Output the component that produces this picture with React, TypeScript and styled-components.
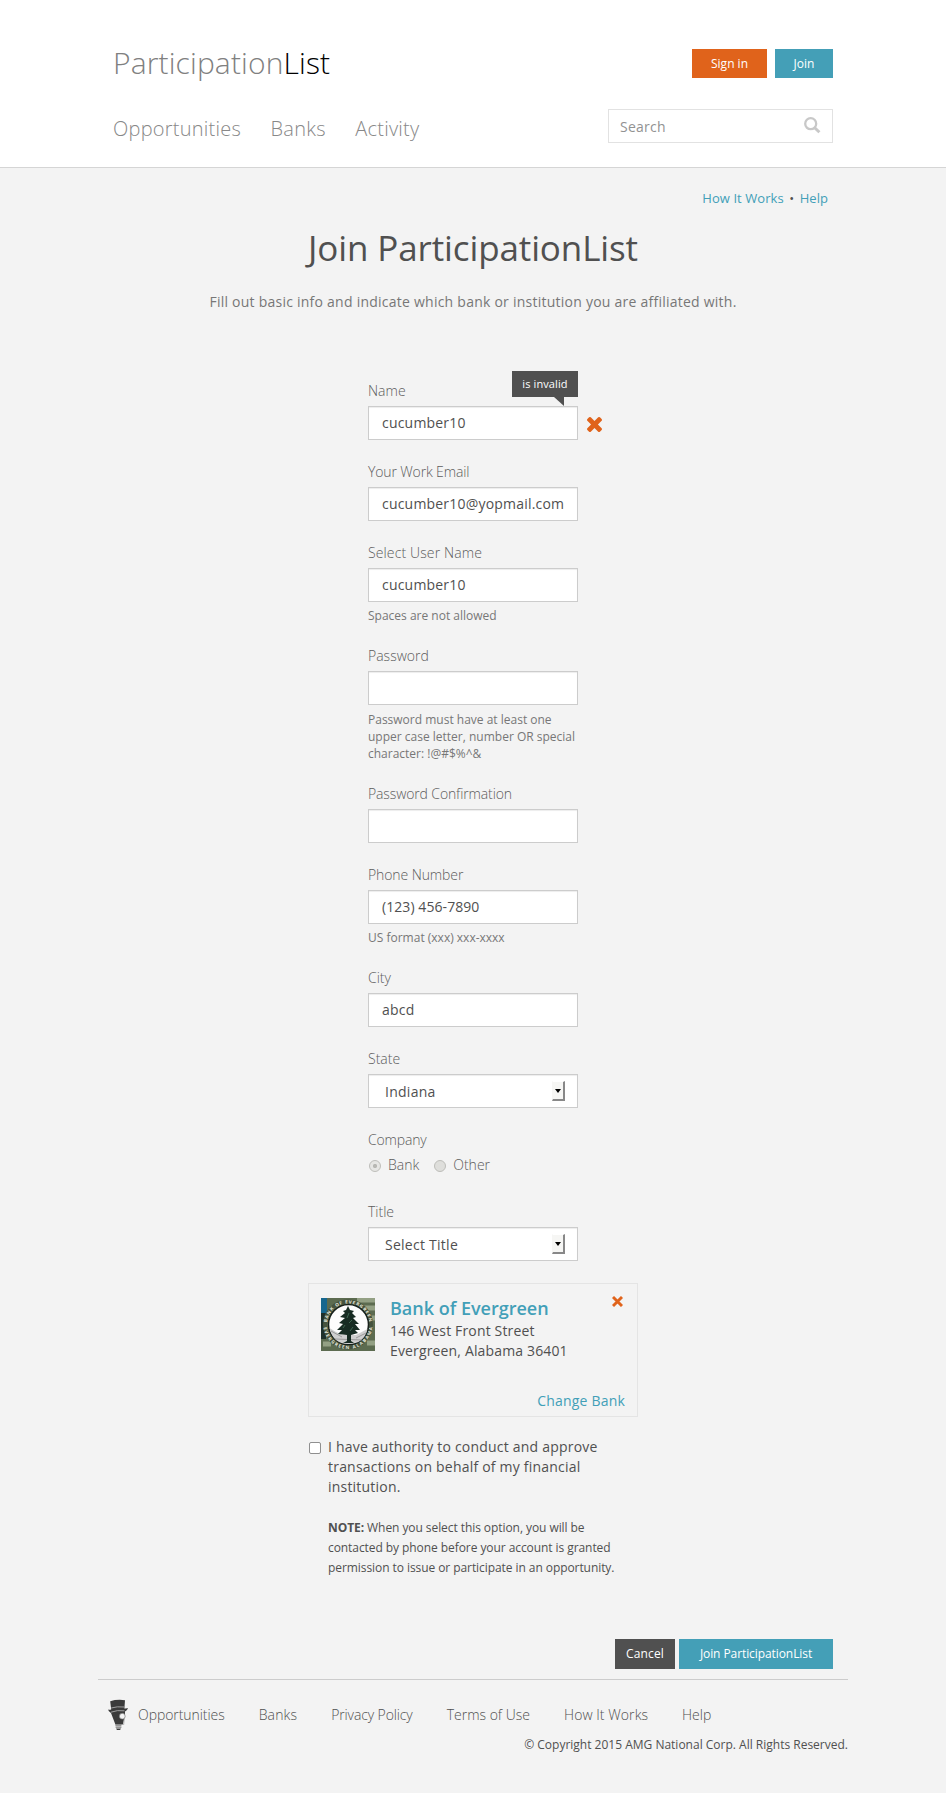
import React from "react";
import styled, { createGlobalStyle } from "styled-components";

const Global = createGlobalStyle`
  *, *::before, *::after { box-sizing: border-box; }
  body { margin: 0; background: #f3f3f3; color: #505050; font: 14px/20px "Open Sans", "Noto Sans", sans-serif; }
  a { color: inherit; text-decoration: none; }
  button, input { font-family: inherit; letter-spacing: inherit; }
`;

const Page = styled.div`min-height: 1793px;`;
const Header = styled.header`
  height: 168px; background: #fff; border-bottom: 1px solid #d5d5d5;
  padding: 49px 113px 0;
`;
const HeaderRow = styled.div<{ $top?: number }>`
  display: flex; justify-content: space-between; align-items: flex-start;
  margin-top: ${p => p.$top ?? 0}px;
`;
const Logo = styled.a`
  font-size: 30px; font-weight: 300; line-height: 27px; letter-spacing: .13px; color: #808080;
  span { color: #000; }
`;
const Actions = styled.div<{ $gap: number }>`display: flex; gap: ${p => p.$gap}px;`;
const Button = styled.button<{ $bg: string; $w: number; $h: number; $track?: number }>`
  border: 0; padding: 0; background: ${p => p.$bg}; color: #fff; letter-spacing: ${p => p.$track ?? 0}px;
  width: ${p => p.$w}px; height: ${p => p.$h}px; font-size: 12px; line-height: 20px;
`;
const Nav = styled.nav`
  display: flex; gap: 29.5px; font-size: 20px; font-weight: 300; line-height: 40px; letter-spacing: .24px; color: #888;
`;
const Search = styled.label`
  width: 225px; height: 34px; border: 1px solid #e2e2e2; display: flex; align-items: center;
  justify-content: space-between; padding: 0 11px 2px 11px; letter-spacing: .24px;
  input { border: 0; outline: 0; width: 150px; padding: 2px 0 0; font-size: 14px; background: none; }
  input::placeholder { color: #929292; opacity: 1; }
`;
const HelpLinks = styled.div`
  display: flex; justify-content: flex-end; gap: 5.5px; padding: 20px 118px 0 0; font-size: 13px; line-height: 20px; letter-spacing: .06px;
`;
const Link = styled.a`&& { color: #429fb8; }`;
const Title = styled.h1`
  margin: 20px 0 0; text-align: center; font-size: 35px; font-weight: 400; line-height: 40px; letter-spacing: -.12px;
`;
const Intro = styled.p`margin: 24px 0 0; text-align: center; color: #777; font-size: 14px; line-height: 20px; letter-spacing: .24px;`;
const Form = styled.form`width: 210px; margin: 69px 0 0 368px;`;
const Field = styled.div`position: relative; margin-bottom: 22px;`;
const Label = styled.label<{ $track?: number }>`
  display: block; font-weight: 300; line-height: 20px; margin-bottom: 5px; color: #5c5c5c; letter-spacing: ${p => p.$track ?? 0}px;
`;
const Input = styled.input`
  display: block; width: 210px; height: 34px; border: 1px solid #ccc; background: #fff;
  box-shadow: inset 0 1px 1px rgba(0,0,0,.075); padding: 0 13px 2px; font-size: 14px; color: #505050; outline: 0; border-radius: 0;
  letter-spacing: .2px;
  &[type="tel"] { letter-spacing: .07px; }
`;
const Hint = styled.div<{ $top?: number }>`
  margin-top: ${p => p.$top ?? 5}px; font-size: 12px; line-height: 17px; color: #777;
`;
const Tip = styled.div`
  position: absolute; right: 0; top: -10px; width: 66px; height: 26px; background: #505050; color: #fff;
  font-size: 11px; line-height: 25px; text-align: center; letter-spacing: .1px;
  &::after { content: ""; position: absolute; right: 14px; top: 26px; border-top: 9px solid #505050; border-left: 10px solid transparent; }
`;
const FieldMark = styled.span`position: absolute; left: 219px; top: 36px; line-height: 0;`;
const SelectBox = styled.div`
  width: 210px; height: 34px; border: 1px solid #ccc; background: #fff; box-shadow: inset 0 1px 1px rgba(0,0,0,.075);
  display: flex; align-items: center; justify-content: space-between; padding: 2px 12px 0 16px; letter-spacing: .26px;
`;
const Drop = styled.span`
  width: 13px; height: 20px; background: #f6f6f4; border: solid; border-width: 1px 2px 2px 1px;
  border-color: #fff #888 #888 #f6f6f4; display: flex; align-items: center; justify-content: center; margin-bottom: 2px;
`;
const Radios = styled.div`display: flex; height: 20px; margin: 0 0 27px 1px; font-weight: 300; color: #5c5c5c;`;
const RadioItem = styled.span`display: flex; align-items: center; gap: 7px; margin-right: 15px;`;
const RadioDot = styled.span<{ $on?: boolean }>`
  width: 12px; height: 12px; margin-top: 2px; border-radius: 50%; border: 1px solid #bdbdb9;
  background: ${p => p.$on ? "radial-gradient(circle, #b8b8b4 0 1.8px, #e6e6e4 2.4px)" : "#dededb"};
`;
const Card = styled.section`
  width: 330px; height: 134px; margin-left: 308px; border: 1px solid #e4e4e4; padding: 14px 12px 0;
  display: grid; grid-template-columns: 54px 1fr 13px; column-gap: 15px; letter-spacing: .15px;
`;
const BankName = styled.div`
  font-size: 18px; font-weight: 600; line-height: 20px; margin-bottom: 3px; color: #429fb8; letter-spacing: 0;
`;
const ChangeBank = styled.div`grid-column: 1 / -1; text-align: right; margin-top: 24px; letter-spacing: .2px;`;
const Authority = styled.div`
  display: flex; width: 330px; margin: 20px 0 0 309px; letter-spacing: .21px; white-space: nowrap;
`;
const Check = styled.span`width: 12px; height: 12px; flex: none; margin: 5px 7px 0 0; border: 1px solid #8f8f8f; border-radius: 2px; background: #fff;`;
const Note = styled.p`margin: 21px 0 0; font-size: 12px; line-height: 20px; letter-spacing: -.07px;`;
const Submit = styled.div`display: flex; justify-content: flex-end; gap: 4px; margin: 61px 113px 10px 0;`;
const Footer = styled.footer`margin: 0 98px; border-top: 1px solid #ccc; padding: 19px 0 0 9px;`;
const FooterNav = styled.nav`
  display: flex; align-items: flex-start; gap: 34px; font-weight: 300; line-height: 32px; height: 33px;
  svg { margin-right: -25px; }
`;
const FooterLink = styled.a<{ $track?: number }>`letter-spacing: ${p => p.$track ?? 0}px;`;
const Copyright = styled.div`text-align: right; font-size: 12px; line-height: 20px; margin-top: 3px;`;

const CrossIcon = () => (
  <svg width="15" height="15" viewBox="110 434 1188 1188" fill="#e0631b">
    <path d="M1298 1322q0 40-28 68l-136 136q-28 28-68 28t-68-28l-294-294-294 294q-28 28-68 28t-68-28l-136-136q-28-28-28-68t28-68l294-294-294-294q-28-28-28-68t28-68l136-136q28-28 68-28t68 28l294 294 294-294q28-28 68-28t68 28l136 136q28 28 28 68t-28 68l-294 294 294 294q28 28 28 68z" transform="translate(0 68)" />
  </svg>
);
const RemoveMark = styled.svg`margin-top: -2px;`;
const RemoveIcon = () => (
  <RemoveMark width="11" height="11" viewBox="0 0 11 11" fill="none" stroke="#e0631b" strokeWidth="2.9">
    <path d="M1 1L10 10M10 1L1 10" />
  </RemoveMark>
);
const SearchIcon = () => (
  <svg width="17" height="17" viewBox="0 0 17 17" fill="none" stroke="#c8c8c8">
    <circle cx="6.7" cy="6.7" r="5.5" strokeWidth="2.3" /><path d="M10.7 10.7L15.4 15.3" strokeWidth="3" />
  </svg>
);
const Mascot = () => (
  <svg width="22" height="32" viewBox="0 0 22 32">
    <path fill="#3b3b3b" d="M3.2 2.2Q10 .2 18 1.2L17.4 9.4Q20 9.6 21 9Q20.4 11.6 18 12.4V17L15.8 25.4H8.4L4 14Q1.4 12.4 1 10.6Q2.6 11 4.2 10.6Z" />
    <path d="M4.2 9Q10 7.2 17 8M4 13.2Q10 10.8 17.5 11.8" fill="none" stroke="#aaa" strokeWidth=".9" />
    <circle cx="15.3" cy="17.2" r="2.9" fill="#f3f3f3" stroke="#777" strokeWidth=".7" />
    <path d="M17.3 19.6L16.6 26" stroke="#aaa" strokeWidth=".9" />
    <path d="M8.400 25.600h6v1.200h-6zM8.600 27.600h5.800v1.200H8.600z" fill="#777" /><path d="M9 29.400h5L13 31h-3z" fill="#3b3b3b" />
  </svg>
);
const BankSeal = () => (
  <svg width="54" height="53" viewBox="0 0 54 53">
    <rect width="54" height="53" fill="#5c6b50" /><path d="M0 0h6v15H0z" fill="#17678f" /><path d="M0 15h5v26H0z" fill="#1e302b" />
    <path d="M36 2h18M43 10h11M49 20h5M46 45h8M2 46h8" stroke="#93a084" strokeWidth="5" />
    <circle cx="27" cy="26.500" r="23" fill="none" stroke="#46533e" strokeWidth="4" />
    <path id="ring-top" d="M6 26.500A21 21 0 0 1 48 26.500" fill="none" />
    <path id="ring-bottom" d="M2.400 26.500A24.600 24.600 0 0 0 51.600 26.500" fill="none" />
    <g fill="#e6e9df" fontSize="4.600" fontWeight="700">
      <text><textPath href="#ring-top" startOffset="2" textLength="61">BANK OF EVERGREEN</textPath></text>
      <text><textPath href="#ring-bottom" startOffset="3" textLength="71">EVERGREEN ALABAMA</textPath></text>
    </g>
    <circle cx="27.500" cy="26.500" r="20" fill="#fdfdfd" stroke="#18211c" strokeWidth="1.500" />
    <path d="M8.500 30L15 34L22 37L35 37L46.500 31Q43 46 27.500 46Q12 46 8.500 30" fill="#cfcfcf" />
    <path d="M10 33L21 39M45 35L35 40M14 41L41 42" stroke="#8d8d8d" strokeWidth=".8" />
    <path d="M27 8L29 12L33 13L31 15L35 19L32 20L38 26L34 26L39 32L34 32L37 35L30 37L30 43L33 45H22L26 43V37L17 36L21 32L16 32L22 26L18 25L24 20L19 19L24 15L22 13L25 12Z" fill="#172c23" />
    <path d="M28 15L26 20M31 22L28 25M24 27L22 30M32 29L29 33" stroke="#3f6650" strokeWidth="1" />
  </svg>
);
const Select = ({ value }: { value: string }) => (
  <SelectBox><span>{value}</span><Drop><svg width="6" height="4"><path d="M0 0h6L3 4z" /></svg></Drop></SelectBox>
);
type TextFieldProps = { label: string; value?: string; hint?: string; hintTop?: number; track?: number; type?: string };
const TextField = ({ label, value = "", hint, hintTop, track, type = "text" }: TextFieldProps) => (
  <Field><Label $track={track}>{label}</Label><Input type={type} defaultValue={value} />{hint && <Hint $top={hintTop}>{hint}</Hint>}</Field>
);

export default function App() {
  return (
    <Page>
      <Global />
      <Header>
        <HeaderRow>
          <Logo>Participation<span>List</span></Logo>
          <Actions $gap={8}><Button $bg="#e0631b" $w={75} $h={29}>Sign in</Button><Button $bg="#449fb7" $w={58} $h={29}>Join</Button></Actions>
        </HeaderRow>
        <HeaderRow $top={31}>
          <Nav><a>Opportunities</a><a>Banks</a><a>Activity</a></Nav>
          <Search><input placeholder="Search" /><SearchIcon /></Search>
        </HeaderRow>
      </Header>
      <HelpLinks><Link>How It Works</Link><span>•</span><Link>Help</Link></HelpLinks>
      <Title>Join ParticipationList</Title>
      <Intro>Fill out basic info and indicate which bank or institution you are affiliated with.</Intro>
      <Form>
        <Field>
          <Label>Name</Label><Input defaultValue="cucumber10" />
          <Tip>is invalid</Tip><FieldMark><CrossIcon /></FieldMark>
        </Field>
        <TextField label="Your Work Email" value="cucumber10@yopmail.com" track={-0.14} />
        <TextField label="Select User Name" value="cucumber10" hint="Spaces are not allowed" track={0.12} />
        <TextField label="Password" type="password" hint="Password must have at least one upper case letter, number OR special character: !@#$%^&" hintTop={6} />
        <TextField label="Password Confirmation" type="password" track={-0.12} />
        <TextField label="Phone Number" type="tel" value="(123) 456-7890" hint="US format (xxx) xxx-xxxx" track={-0.1} />
        <TextField label="City" value="abcd" />
        <Field><Label>State</Label><Select value="Indiana" /></Field>
        <Label $track={-0.16}>Company</Label>
        <Radios><RadioItem><RadioDot $on />Bank</RadioItem><RadioItem><RadioDot />Other</RadioItem></Radios>
        <Field><Label>Title</Label><Select value="Select Title" /></Field>
      </Form>
      <Card>
        <BankSeal />
        <div><BankName>Bank of Evergreen</BankName>146 West Front Street<br />Evergreen, Alabama 36401</div>
        <RemoveIcon />
        <ChangeBank><Link>Change Bank</Link></ChangeBank>
      </Card>
      <Authority>
        <Check />
        <div>I have authority to conduct and approve<br />transactions on behalf of my financial<br />institution.
          <Note><b>NOTE:</b> When you select this option, you will be<br />contacted by phone before your account is granted<br />permission to issue or participate in an opportunity.</Note>
        </div>
      </Authority>
      <Submit>
        <Button $bg="#505050" $w={60} $h={30} $track={0.12}>Cancel</Button>
        <Button $bg="#449fb7" $w={154} $h={30} $track={-0.08}>Join ParticipationList</Button>
      </Submit>
      <Footer>
        <FooterNav>
          <Mascot />
          <FooterLink $track={-0.06}>Opportunities</FooterLink><FooterLink $track={0.14}>Banks</FooterLink>
          <FooterLink $track={-0.12}>Privacy Policy</FooterLink><FooterLink>Terms of Use</FooterLink>
          <FooterLink $track={0.06}>How It Works</FooterLink><FooterLink>Help</FooterLink>
        </FooterNav>
        <Copyright>© Copyright 2015 AMG National Corp. All Rights Reserved.</Copyright>
      </Footer>
    </Page>
  );
}
